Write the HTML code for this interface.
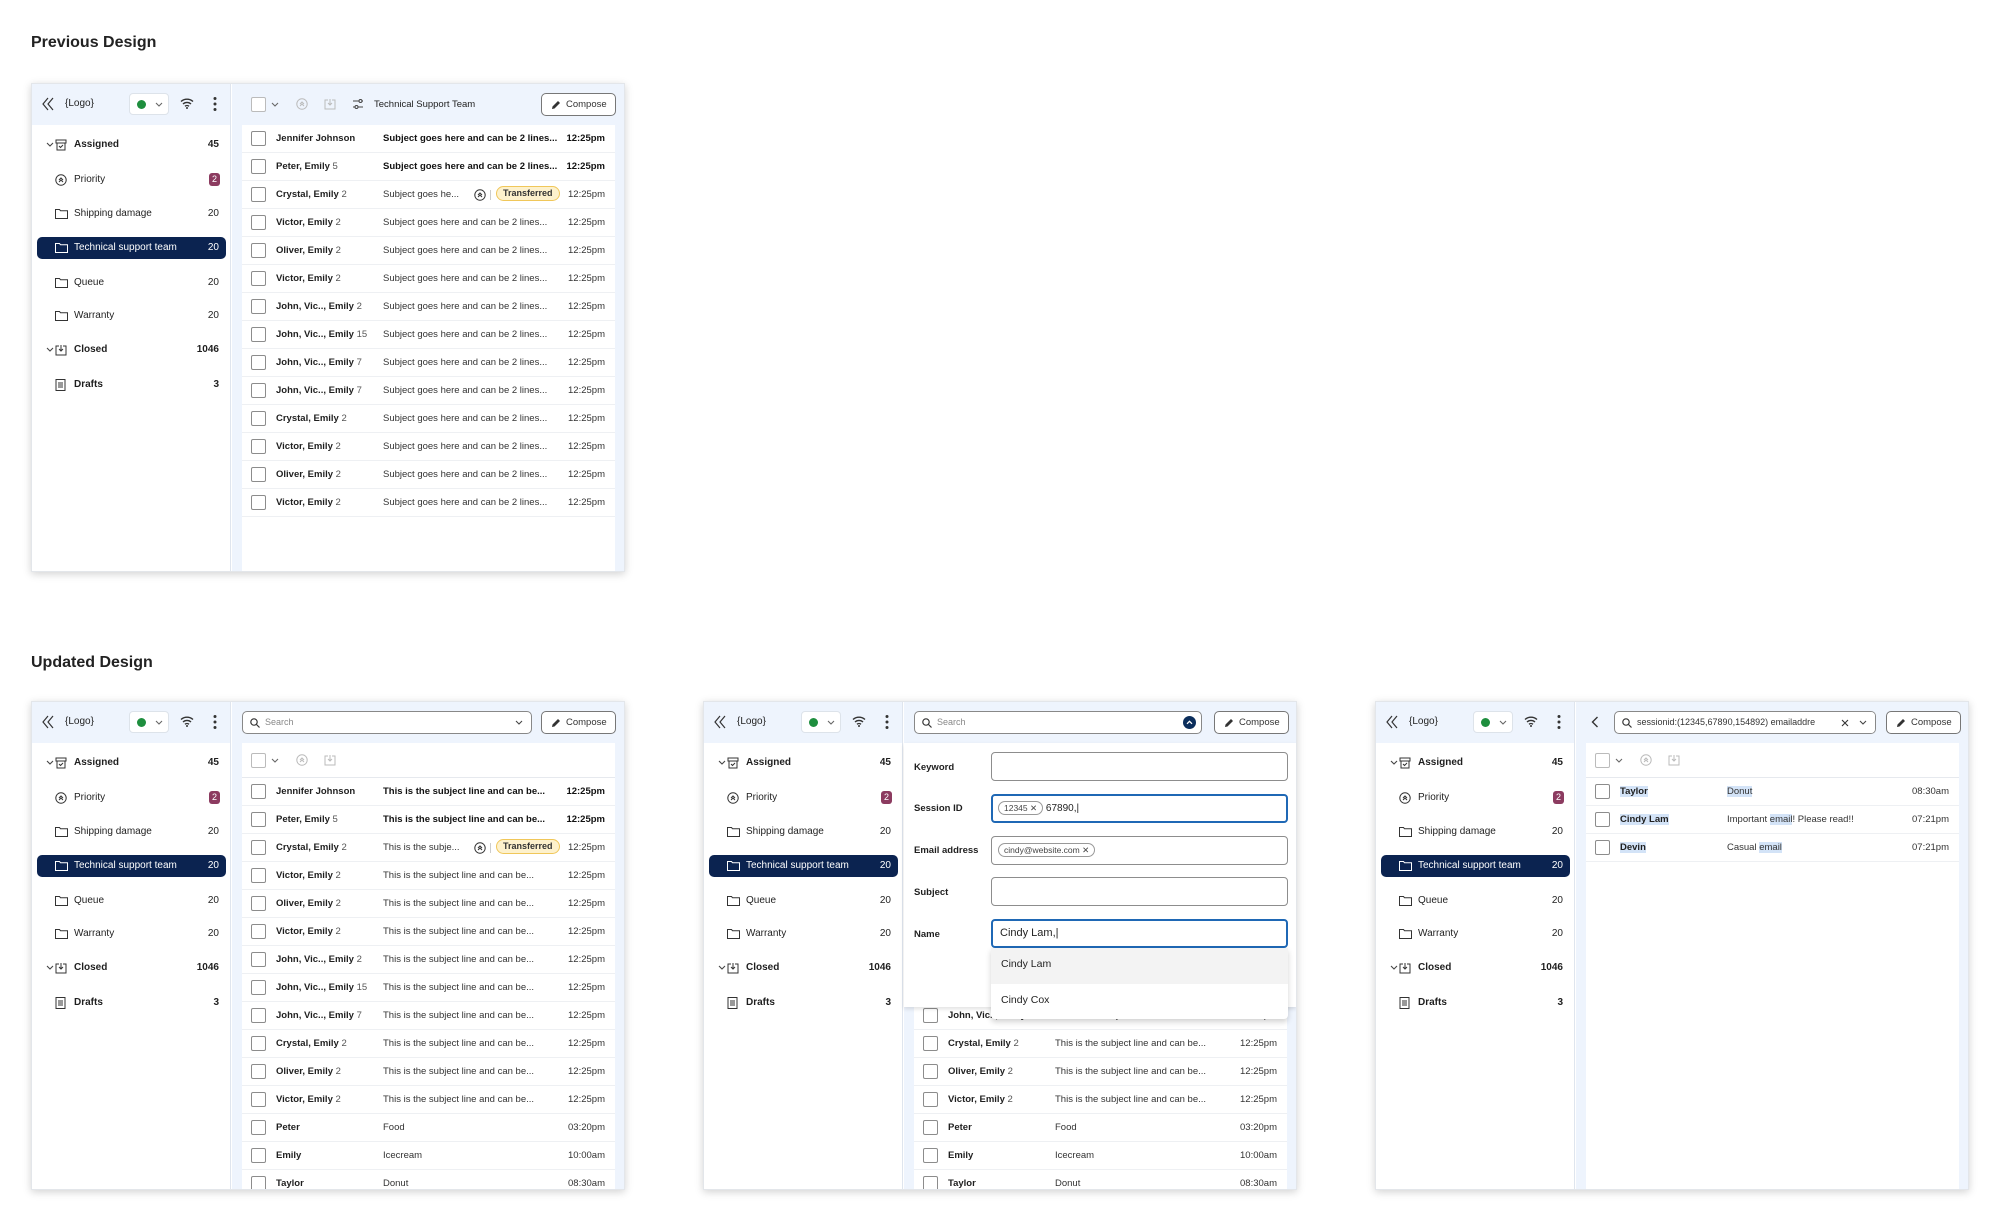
<!DOCTYPE html>
<html><head><meta charset="utf-8"><style>
*{box-sizing:border-box;margin:0;padding:0}
body{width:2000px;height:1228px;background:#fff;font-family:"Liberation Sans",sans-serif;color:#1f1f1f;position:relative;overflow:hidden}
h2{position:absolute;left:31px;font-size:16px;font-weight:bold;color:#222}
.panel{position:absolute;width:594px;height:489px;background:#fff;box-shadow:0 2px 8px rgba(0,0,0,.18);border:1px solid #e3e6ea;overflow:hidden}
.side{position:absolute;left:0;top:0;width:199px;height:100%;border-right:1px solid #dfe5ee;background:#fff}
.shead{position:absolute;left:0;top:0;width:100%;height:41px;background:#eef4fd}
.abs{position:absolute}
.logo{position:absolute;left:33px;top:14px;font-size:10px}
.stat{position:absolute;left:97px;top:9px;width:40px;height:22px;border:1px solid #dde3ea;border-radius:4px;background:#fff}
.stat i{position:absolute;left:7px;top:6px;width:9px;height:9px;border-radius:50%;background:#1e8e3e}
.item{position:absolute;left:5px;width:189px;height:22px;font-size:10px;font-weight:bold}
.item.sel{background:#0b2350;color:#fff;border-radius:5px}
.item .lb{position:absolute;left:37px;top:5px}
.item .ct{position:absolute;right:7px;top:5px}
.item svg.ic{position:absolute;left:18px;top:5px}
.item svg.car{position:absolute;left:9px;top:8px}
.badge{position:absolute;right:6px;top:4px;width:11px;height:13px;background:#8c3b60;color:#fff;border-radius:3px;font-size:9px;text-align:center;line-height:13px}
.main{position:absolute;left:200px;top:0;right:0;bottom:0;background:#eef4fd}
.card{position:absolute;left:10px;right:9px;top:41px;bottom:0;background:#fff}
.compose{position:absolute;left:309px;top:9px;width:75px;height:23px;border:1px solid #777;border-radius:5px;background:#fff;font-size:9.5px;line-height:21px;padding-left:24px;color:#333}
.compose svg{position:absolute;left:9px;top:6px}
.search{position:absolute;top:9px;height:23px;border:1px solid #888;border-radius:5px;background:#fff;font-size:9px;line-height:21px;padding-left:22px;color:#888;white-space:nowrap;overflow:hidden}
.search svg.q{position:absolute;left:7px;top:6px}
.cb{position:absolute;width:15px;height:15px;border:1px solid #8c8c8c;border-radius:2px;background:#fff}
.tb{position:absolute;left:0;right:0;top:0;height:35px;border-bottom:1px solid #e6e9ee}
.rows{position:absolute;left:0;right:0}
.row{position:relative;height:28px;border-bottom:1px solid #eef0f3;font-size:9.5px;white-space:nowrap}
.row .cb{left:9px;top:6px}
.row .n{position:absolute;left:34px;top:8px;font-weight:bold}
.row .n span{font-weight:normal;color:#555}
.row .s{position:absolute;left:141px;top:8px;color:#333}
.row .t{position:absolute;right:10px;top:8px;color:#333}
.row.b .s,.row.b .t{font-weight:bold;color:#111}
.chip{position:absolute;left:254px;top:5px;height:15px;padding:0 6px;background:#fdf1cc;border:1px solid #f0c75a;border-radius:8px;font-size:9px;line-height:13px;font-weight:bold;color:#333}
.hl{background:#d3e3f7}
.lbl{position:absolute;left:10px;font-size:9.5px;font-weight:bold}
.fld{position:absolute;left:87px;width:297px;height:29px;border:1px solid #8d8d8d;border-radius:4px;background:#fff;font-size:10px}
.fld.f{border:2px solid #1f68b5}
.tag{display:inline-block;border:1px solid #999;border-radius:9px;font-size:8.5px;padding:0 5px;height:14px;line-height:12px;color:#444;margin-left:6px;margin-top:6px}
</style></head><body>

<h2 style="top:34px">Previous Design</h2>
<h2 style="top:654px">Updated Design</h2>

<!-- ============ PANEL 1 ============ -->
<div class="panel" style="left:31px;top:83px">
 <div class="side">
  <div class="shead">
   <svg class="abs" style="left:10px;top:13px" width="12" height="14" viewBox="0 0 12 14"><path d="M6 1L1 7l5 6M11 1L6 7l5 6" fill="none" stroke="#333" stroke-width="1.2"/></svg>
   <div class="logo">{Logo}</div>
   <div class="stat"><i></i><svg class="abs" style="left:25px;top:8px" width="8" height="6" viewBox="0 0 8 6"><path d="M1 1l3 3 3-3" fill="none" stroke="#666" stroke-width="1.1"/></svg></div>
   <svg class="abs" style="left:148px;top:13px" width="14" height="12" viewBox="0 0 14 12"><path d="M1 4.5a9 9 0 0 1 12 0M3 7a6 6 0 0 1 8 0M5 9.3a3 3 0 0 1 4 0" fill="none" stroke="#333" stroke-width="1.4"/><circle cx="7" cy="11" r="1" fill="#333"/></svg>
   <svg class="abs" style="left:181px;top:12px" width="4" height="16" viewBox="0 0 4 16"><circle cx="2" cy="2.5" r="1.5" fill="#333"/><circle cx="2" cy="8" r="1.5" fill="#333"/><circle cx="2" cy="13.5" r="1.5" fill="#333"/></svg>
  </div>
  <div class="item" style="top:50px"><svg class="car" width="8" height="6" viewBox="0 0 8 6"><path d="M1 1l3 3 3-3" fill="none" stroke="#444" stroke-width="1.1"/></svg><svg class="ic" width="12" height="12" viewBox="0 0 12 12"><path d="M1 1h10v3H1zM2 4v7h8V4M4 7l1.5 1.5L8 6" fill="none" stroke="#333" stroke-width="1"/></svg><span class="lb">Assigned</span><span class="ct">45</span></div>
  <div class="item" style="top:85px;font-weight:normal"><svg class="ic" width="12" height="12" viewBox="0 0 12 12"><circle cx="6" cy="6" r="5.2" fill="none" stroke="#333"/><path d="M4 6l2-2 2 2M4 8l2-2 2 2" fill="none" stroke="#333"/></svg><span class="lb">Priority</span><span class="badge">2</span></div>
  <div class="item" style="top:119px;font-weight:normal"><svg class="ic" width="13" height="11" viewBox="0 0 13 11"><path d="M.5 1.5h4l1 1.2h7v7.8H.5z" fill="none" stroke="#333"/></svg><span class="lb">Shipping damage</span><span class="ct">20</span></div>
  <div class="item sel" style="top:153px;font-weight:normal"><svg class="ic" width="13" height="11" viewBox="0 0 13 11"><path d="M.5 1.5h4l1 1.2h7v7.8H.5z" fill="none" stroke="#fff"/></svg><span class="lb">Technical support team</span><span class="ct">20</span></div>
  <div class="item" style="top:188px;font-weight:normal"><svg class="ic" width="13" height="11" viewBox="0 0 13 11"><path d="M.5 1.5h4l1 1.2h7v7.8H.5z" fill="none" stroke="#333"/></svg><span class="lb">Queue</span><span class="ct">20</span></div>
  <div class="item" style="top:221px;font-weight:normal"><svg class="ic" width="13" height="11" viewBox="0 0 13 11"><path d="M.5 1.5h4l1 1.2h7v7.8H.5z" fill="none" stroke="#333"/></svg><span class="lb">Warranty</span><span class="ct">20</span></div>
  <div class="item" style="top:255px"><svg class="car" width="8" height="6" viewBox="0 0 8 6"><path d="M1 1l3 3 3-3" fill="none" stroke="#444" stroke-width="1.1"/></svg><svg class="ic" width="12" height="12" viewBox="0 0 12 12"><path d="M4 2H1v9h10V2H8M6 1v6M4 5l2 2 2-2" fill="none" stroke="#333"/></svg><span class="lb">Closed</span><span class="ct">1046</span></div>
  <div class="item" style="top:290px"><svg class="ic" width="11" height="12" viewBox="0 0 11 12"><path d="M1 .5h9v11H1zM3 4h5M3 6h5M3 8h5" fill="none" stroke="#333"/></svg><span class="lb">Drafts</span><span class="ct">3</span></div>
 </div>
 <div class="main">
  <div class="cb" style="left:19px;top:13px;border-color:#bbb"></div>
  <svg class="abs" style="left:39px;top:18px" width="8" height="6" viewBox="0 0 8 6"><path d="M1 1l3 3 3-3" fill="none" stroke="#666" stroke-width="1.1"/></svg>
  <svg class="abs" style="left:64px;top:14px" width="12" height="12" viewBox="0 0 12 12"><circle cx="6" cy="6" r="5.2" fill="none" stroke="#bbb"/><path d="M4 6l2-2 2 2M4 8l2-2 2 2" fill="none" stroke="#bbb"/></svg>
  <svg class="abs" style="left:92px;top:14px" width="12" height="12" viewBox="0 0 12 12"><path d="M4 2H1v9h10V2H8M6 1v6M4 5l2 2 2-2" fill="none" stroke="#bbb"/></svg>
  <svg class="abs" style="left:120px;top:14px" width="12" height="12" viewBox="0 0 12 12"><path d="M1 3h6M10 3h1M1 9h2M6 9h5" stroke="#444" fill="none"/><circle cx="8.5" cy="3" r="1.5" fill="none" stroke="#444"/><circle cx="4.5" cy="9" r="1.5" fill="none" stroke="#444"/></svg>
  <div class="abs" style="left:142px;top:15px;font-size:9.5px">Technical Support Team</div>
  <div class="compose"><svg width="10" height="10" viewBox="0 0 10 10"><path d="M1 9l.5-2.5L7 1l2 2-5.5 5.5z" fill="#333"/></svg>Compose</div>
  <div class="card">
   <div class="rows" style="top:0">
    <div class="row b"><div class="cb"></div><div class="n">Jennifer Johnson</div><div class="s">Subject goes here and can be 2 lines...</div><div class="t">12:25pm</div></div>
    <div class="row b"><div class="cb"></div><div class="n">Peter, Emily <span>5</span></div><div class="s">Subject goes here and can be 2 lines...</div><div class="t">12:25pm</div></div>
    <div class="row"><div class="cb"></div><div class="n">Crystal, Emily <span>2</span></div><div class="s">Subject goes he...</div><svg class="abs" style="left:232px;top:8px" width="12" height="12" viewBox="0 0 12 12"><circle cx="6" cy="6" r="5.2" fill="none" stroke="#333"/><path d="M4 6l2-2 2 2M4 8l2-2 2 2" fill="none" stroke="#333"/></svg><div class="abs" style="left:248px;top:9px;width:1px;height:10px;background:#ccc"></div><div class="chip">Transferred</div><div class="t">12:25pm</div></div>
    <div class="row"><div class="cb"></div><div class="n">Victor, Emily <span>2</span></div><div class="s">Subject goes here and can be 2 lines...</div><div class="t">12:25pm</div></div>
    <div class="row"><div class="cb"></div><div class="n">Oliver, Emily <span>2</span></div><div class="s">Subject goes here and can be 2 lines...</div><div class="t">12:25pm</div></div>
    <div class="row"><div class="cb"></div><div class="n">Victor, Emily <span>2</span></div><div class="s">Subject goes here and can be 2 lines...</div><div class="t">12:25pm</div></div>
    <div class="row"><div class="cb"></div><div class="n">John, Vic.., Emily <span>2</span></div><div class="s">Subject goes here and can be 2 lines...</div><div class="t">12:25pm</div></div>
    <div class="row"><div class="cb"></div><div class="n">John, Vic.., Emily <span>15</span></div><div class="s">Subject goes here and can be 2 lines...</div><div class="t">12:25pm</div></div>
    <div class="row"><div class="cb"></div><div class="n">John, Vic.., Emily <span>7</span></div><div class="s">Subject goes here and can be 2 lines...</div><div class="t">12:25pm</div></div>
    <div class="row"><div class="cb"></div><div class="n">John, Vic.., Emily <span>7</span></div><div class="s">Subject goes here and can be 2 lines...</div><div class="t">12:25pm</div></div>
    <div class="row"><div class="cb"></div><div class="n">Crystal, Emily <span>2</span></div><div class="s">Subject goes here and can be 2 lines...</div><div class="t">12:25pm</div></div>
    <div class="row"><div class="cb"></div><div class="n">Victor, Emily <span>2</span></div><div class="s">Subject goes here and can be 2 lines...</div><div class="t">12:25pm</div></div>
    <div class="row"><div class="cb"></div><div class="n">Oliver, Emily <span>2</span></div><div class="s">Subject goes here and can be 2 lines...</div><div class="t">12:25pm</div></div>
    <div class="row"><div class="cb"></div><div class="n">Victor, Emily <span>2</span></div><div class="s">Subject goes here and can be 2 lines...</div><div class="t">12:25pm</div></div>
   </div>
  </div>
 </div>
</div>

<!-- PANEL 2 -->
<div class="panel" style="left:31px;top:701px">
 <div class="side">
  <div class="shead">
   <svg class="abs" style="left:10px;top:13px" width="12" height="14" viewBox="0 0 12 14"><path d="M6 1L1 7l5 6M11 1L6 7l5 6" fill="none" stroke="#333" stroke-width="1.2"/></svg>
   <div class="logo">{Logo}</div>
   <div class="stat"><i></i><svg class="abs" style="left:25px;top:8px" width="8" height="6" viewBox="0 0 8 6"><path d="M1 1l3 3 3-3" fill="none" stroke="#666" stroke-width="1.1"/></svg></div>
   <svg class="abs" style="left:148px;top:13px" width="14" height="12" viewBox="0 0 14 12"><path d="M1 4.5a9 9 0 0 1 12 0M3 7a6 6 0 0 1 8 0M5 9.3a3 3 0 0 1 4 0" fill="none" stroke="#333" stroke-width="1.4"/><circle cx="7" cy="11" r="1" fill="#333"/></svg>
   <svg class="abs" style="left:181px;top:12px" width="4" height="16" viewBox="0 0 4 16"><circle cx="2" cy="2.5" r="1.5" fill="#333"/><circle cx="2" cy="8" r="1.5" fill="#333"/><circle cx="2" cy="13.5" r="1.5" fill="#333"/></svg>
  </div>
  <div class="item" style="top:50px"><svg class="car" width="8" height="6" viewBox="0 0 8 6"><path d="M1 1l3 3 3-3" fill="none" stroke="#444" stroke-width="1.1"/></svg><svg class="ic" width="12" height="12" viewBox="0 0 12 12"><path d="M1 1h10v3H1zM2 4v7h8V4M4 7l1.5 1.5L8 6" fill="none" stroke="#333" stroke-width="1"/></svg><span class="lb">Assigned</span><span class="ct">45</span></div>
  <div class="item" style="top:85px;font-weight:normal"><svg class="ic" width="12" height="12" viewBox="0 0 12 12"><circle cx="6" cy="6" r="5.2" fill="none" stroke="#333"/><path d="M4 6l2-2 2 2M4 8l2-2 2 2" fill="none" stroke="#333"/></svg><span class="lb">Priority</span><span class="badge">2</span></div>
  <div class="item" style="top:119px;font-weight:normal"><svg class="ic" width="13" height="11" viewBox="0 0 13 11"><path d="M.5 1.5h4l1 1.2h7v7.8H.5z" fill="none" stroke="#333"/></svg><span class="lb">Shipping damage</span><span class="ct">20</span></div>
  <div class="item sel" style="top:153px;font-weight:normal"><svg class="ic" width="13" height="11" viewBox="0 0 13 11"><path d="M.5 1.5h4l1 1.2h7v7.8H.5z" fill="none" stroke="#fff"/></svg><span class="lb">Technical support team</span><span class="ct">20</span></div>
  <div class="item" style="top:188px;font-weight:normal"><svg class="ic" width="13" height="11" viewBox="0 0 13 11"><path d="M.5 1.5h4l1 1.2h7v7.8H.5z" fill="none" stroke="#333"/></svg><span class="lb">Queue</span><span class="ct">20</span></div>
  <div class="item" style="top:221px;font-weight:normal"><svg class="ic" width="13" height="11" viewBox="0 0 13 11"><path d="M.5 1.5h4l1 1.2h7v7.8H.5z" fill="none" stroke="#333"/></svg><span class="lb">Warranty</span><span class="ct">20</span></div>
  <div class="item" style="top:255px"><svg class="car" width="8" height="6" viewBox="0 0 8 6"><path d="M1 1l3 3 3-3" fill="none" stroke="#444" stroke-width="1.1"/></svg><svg class="ic" width="12" height="12" viewBox="0 0 12 12"><path d="M4 2H1v9h10V2H8M6 1v6M4 5l2 2 2-2" fill="none" stroke="#333"/></svg><span class="lb">Closed</span><span class="ct">1046</span></div>
  <div class="item" style="top:290px"><svg class="ic" width="11" height="12" viewBox="0 0 11 12"><path d="M1 .5h9v11H1zM3 4h5M3 6h5M3 8h5" fill="none" stroke="#333"/></svg><span class="lb">Drafts</span><span class="ct">3</span></div>
 </div>
 <div class="main">
  <div class="search" style="left:10px;width:290px"><svg class="q" width="10" height="10" viewBox="0 0 10 10"><circle cx="4" cy="4" r="3.2" fill="none" stroke="#333" stroke-width="1.2"/><path d="M6.5 6.5L9.5 9.5" stroke="#333" stroke-width="1.2"/></svg>Search<svg class="abs" style="right:8px;top:8px" width="8" height="6" viewBox="0 0 8 6"><path d="M1 1l3 3 3-3" fill="none" stroke="#444" stroke-width="1.1"/></svg></div>
  <div class="compose"><svg width="10" height="10" viewBox="0 0 10 10"><path d="M1 9l.5-2.5L7 1l2 2-5.5 5.5z" fill="#333"/></svg>Compose</div>
  <div class="card">
   <div class="tb"><div class="cb" style="left:9px;top:10px;border-color:#bbb"></div><svg class="abs" style="left:29px;top:15px" width="8" height="6" viewBox="0 0 8 6"><path d="M1 1l3 3 3-3" fill="none" stroke="#666" stroke-width="1.1"/></svg><svg class="abs" style="left:54px;top:11px" width="12" height="12" viewBox="0 0 12 12"><circle cx="6" cy="6" r="5.2" fill="none" stroke="#bbb"/><path d="M4 6l2-2 2 2M4 8l2-2 2 2" fill="none" stroke="#bbb"/></svg><svg class="abs" style="left:82px;top:11px" width="12" height="12" viewBox="0 0 12 12"><path d="M4 2H1v9h10V2H8M6 1v6M4 5l2 2 2-2" fill="none" stroke="#bbb"/></svg></div>
   <div class="rows" style="top:35px">
    <div class="row b"><div class="cb"></div><div class="n">Jennifer Johnson</div><div class="s">This is the subject line and can be...</div><div class="t">12:25pm</div></div>
    <div class="row b"><div class="cb"></div><div class="n">Peter, Emily <span>5</span></div><div class="s">This is the subject line and can be...</div><div class="t">12:25pm</div></div>
    <div class="row"><div class="cb"></div><div class="n">Crystal, Emily <span>2</span></div><div class="s">This is the subje...</div><svg class="abs" style="left:232px;top:8px" width="12" height="12" viewBox="0 0 12 12"><circle cx="6" cy="6" r="5.2" fill="none" stroke="#333"/><path d="M4 6l2-2 2 2M4 8l2-2 2 2" fill="none" stroke="#333"/></svg><div class="abs" style="left:248px;top:9px;width:1px;height:10px;background:#ccc"></div><div class="chip">Transferred</div><div class="t">12:25pm</div></div>
    <div class="row"><div class="cb"></div><div class="n">Victor, Emily <span>2</span></div><div class="s">This is the subject line and can be...</div><div class="t">12:25pm</div></div>
    <div class="row"><div class="cb"></div><div class="n">Oliver, Emily <span>2</span></div><div class="s">This is the subject line and can be...</div><div class="t">12:25pm</div></div>
    <div class="row"><div class="cb"></div><div class="n">Victor, Emily <span>2</span></div><div class="s">This is the subject line and can be...</div><div class="t">12:25pm</div></div>
    <div class="row"><div class="cb"></div><div class="n">John, Vic.., Emily <span>2</span></div><div class="s">This is the subject line and can be...</div><div class="t">12:25pm</div></div>
    <div class="row"><div class="cb"></div><div class="n">John, Vic.., Emily <span>15</span></div><div class="s">This is the subject line and can be...</div><div class="t">12:25pm</div></div>
    <div class="row"><div class="cb"></div><div class="n">John, Vic.., Emily <span>7</span></div><div class="s">This is the subject line and can be...</div><div class="t">12:25pm</div></div>
    <div class="row"><div class="cb"></div><div class="n">Crystal, Emily <span>2</span></div><div class="s">This is the subject line and can be...</div><div class="t">12:25pm</div></div>
    <div class="row"><div class="cb"></div><div class="n">Oliver, Emily <span>2</span></div><div class="s">This is the subject line and can be...</div><div class="t">12:25pm</div></div>
    <div class="row"><div class="cb"></div><div class="n">Victor, Emily <span>2</span></div><div class="s">This is the subject line and can be...</div><div class="t">12:25pm</div></div>
    <div class="row"><div class="cb"></div><div class="n">Peter</div><div class="s">Food</div><div class="t">03:20pm</div></div>
    <div class="row"><div class="cb"></div><div class="n">Emily</div><div class="s">Icecream</div><div class="t">10:00am</div></div>
    <div class="row"><div class="cb"></div><div class="n">Taylor</div><div class="s">Donut</div><div class="t">08:30am</div></div>
   </div>
  </div>
 </div>
</div>

<!-- PANEL 3 -->
<div class="panel" style="left:703px;top:701px">
 <div class="side">
  <div class="shead">
   <svg class="abs" style="left:10px;top:13px" width="12" height="14" viewBox="0 0 12 14"><path d="M6 1L1 7l5 6M11 1L6 7l5 6" fill="none" stroke="#333" stroke-width="1.2"/></svg>
   <div class="logo">{Logo}</div>
   <div class="stat"><i></i><svg class="abs" style="left:25px;top:8px" width="8" height="6" viewBox="0 0 8 6"><path d="M1 1l3 3 3-3" fill="none" stroke="#666" stroke-width="1.1"/></svg></div>
   <svg class="abs" style="left:148px;top:13px" width="14" height="12" viewBox="0 0 14 12"><path d="M1 4.5a9 9 0 0 1 12 0M3 7a6 6 0 0 1 8 0M5 9.3a3 3 0 0 1 4 0" fill="none" stroke="#333" stroke-width="1.4"/><circle cx="7" cy="11" r="1" fill="#333"/></svg>
   <svg class="abs" style="left:181px;top:12px" width="4" height="16" viewBox="0 0 4 16"><circle cx="2" cy="2.5" r="1.5" fill="#333"/><circle cx="2" cy="8" r="1.5" fill="#333"/><circle cx="2" cy="13.5" r="1.5" fill="#333"/></svg>
  </div>
  <div class="item" style="top:50px"><svg class="car" width="8" height="6" viewBox="0 0 8 6"><path d="M1 1l3 3 3-3" fill="none" stroke="#444" stroke-width="1.1"/></svg><svg class="ic" width="12" height="12" viewBox="0 0 12 12"><path d="M1 1h10v3H1zM2 4v7h8V4M4 7l1.5 1.5L8 6" fill="none" stroke="#333" stroke-width="1"/></svg><span class="lb">Assigned</span><span class="ct">45</span></div>
  <div class="item" style="top:85px;font-weight:normal"><svg class="ic" width="12" height="12" viewBox="0 0 12 12"><circle cx="6" cy="6" r="5.2" fill="none" stroke="#333"/><path d="M4 6l2-2 2 2M4 8l2-2 2 2" fill="none" stroke="#333"/></svg><span class="lb">Priority</span><span class="badge">2</span></div>
  <div class="item" style="top:119px;font-weight:normal"><svg class="ic" width="13" height="11" viewBox="0 0 13 11"><path d="M.5 1.5h4l1 1.2h7v7.8H.5z" fill="none" stroke="#333"/></svg><span class="lb">Shipping damage</span><span class="ct">20</span></div>
  <div class="item sel" style="top:153px;font-weight:normal"><svg class="ic" width="13" height="11" viewBox="0 0 13 11"><path d="M.5 1.5h4l1 1.2h7v7.8H.5z" fill="none" stroke="#fff"/></svg><span class="lb">Technical support team</span><span class="ct">20</span></div>
  <div class="item" style="top:188px;font-weight:normal"><svg class="ic" width="13" height="11" viewBox="0 0 13 11"><path d="M.5 1.5h4l1 1.2h7v7.8H.5z" fill="none" stroke="#333"/></svg><span class="lb">Queue</span><span class="ct">20</span></div>
  <div class="item" style="top:221px;font-weight:normal"><svg class="ic" width="13" height="11" viewBox="0 0 13 11"><path d="M.5 1.5h4l1 1.2h7v7.8H.5z" fill="none" stroke="#333"/></svg><span class="lb">Warranty</span><span class="ct">20</span></div>
  <div class="item" style="top:255px"><svg class="car" width="8" height="6" viewBox="0 0 8 6"><path d="M1 1l3 3 3-3" fill="none" stroke="#444" stroke-width="1.1"/></svg><svg class="ic" width="12" height="12" viewBox="0 0 12 12"><path d="M4 2H1v9h10V2H8M6 1v6M4 5l2 2 2-2" fill="none" stroke="#333"/></svg><span class="lb">Closed</span><span class="ct">1046</span></div>
  <div class="item" style="top:290px"><svg class="ic" width="11" height="12" viewBox="0 0 11 12"><path d="M1 .5h9v11H1zM3 4h5M3 6h5M3 8h5" fill="none" stroke="#333"/></svg><span class="lb">Drafts</span><span class="ct">3</span></div>
 </div>
 <div class="main">
  <div class="search" style="left:10px;width:288px"><svg class="q" width="10" height="10" viewBox="0 0 10 10"><circle cx="4" cy="4" r="3.2" fill="none" stroke="#333" stroke-width="1.2"/><path d="M6.5 6.5L9.5 9.5" stroke="#333" stroke-width="1.2"/></svg>Search<svg class="abs" style="right:5px;top:4px" width="13" height="13" viewBox="0 0 13 13"><circle cx="6.5" cy="6.5" r="6.5" fill="#0b2e5c"/><path d="M4 7.8l2.5-2.5 2.5 2.5" fill="none" stroke="#fff" stroke-width="1.3"/></svg></div>
  <div class="compose" style="left:310px"><svg width="10" height="10" viewBox="0 0 10 10"><path d="M1 9l.5-2.5L7 1l2 2-5.5 5.5z" fill="#333"/></svg>Compose</div>
  <div class="card">
   <div class="tb"></div>
   <div class="rows" style="top:35px">
    <div class="row"></div><div class="row"></div><div class="row"></div><div class="row"></div><div class="row"></div><div class="row"></div><div class="row"></div><div class="row"></div>
    <div class="row"><div class="cb"></div><div class="n">John, Vic.., Emily <span>7</span></div><div class="s">This is the subject line and can be...</div><div class="t">12:25pm</div></div>
    <div class="row"><div class="cb"></div><div class="n">Crystal, Emily <span>2</span></div><div class="s">This is the subject line and can be...</div><div class="t">12:25pm</div></div>
    <div class="row"><div class="cb"></div><div class="n">Oliver, Emily <span>2</span></div><div class="s">This is the subject line and can be...</div><div class="t">12:25pm</div></div>
    <div class="row"><div class="cb"></div><div class="n">Victor, Emily <span>2</span></div><div class="s">This is the subject line and can be...</div><div class="t">12:25pm</div></div>
    <div class="row"><div class="cb"></div><div class="n">Peter</div><div class="s">Food</div><div class="t">03:20pm</div></div>
    <div class="row"><div class="cb"></div><div class="n">Emily</div><div class="s">Icecream</div><div class="t">10:00am</div></div>
    <div class="row"><div class="cb"></div><div class="n">Taylor</div><div class="s">Donut</div><div class="t">08:30am</div></div>
   </div>
  </div>
  <div class="abs" style="left:0;right:0;top:41px;height:264px;background:#fff;box-shadow:0 2px 4px rgba(0,0,0,.12)">
   <div class="lbl" style="top:19px">Keyword</div>
   <div class="fld" style="top:9px"></div>
   <div class="lbl" style="top:60px">Session ID</div>
   <div class="fld f" style="top:51px"><span class="tag" style="margin-left:5px;margin-top:5px">12345 &#x2715;</span> <span style="font-size:10px">67890,|</span></div>
   <div class="lbl" style="top:102px">Email address</div>
   <div class="fld" style="top:93px"><span class="tag">cindy@website.com &#x2715;</span></div>
   <div class="lbl" style="top:144px">Subject</div>
   <div class="fld" style="top:134px"></div>
   <div class="lbl" style="top:186px">Name</div>
   <div class="fld f" style="top:176px;font-size:11px;padding:6px 0 0 7px">Cindy Lam,|</div>
  </div>
  <div class="abs" style="left:87px;top:246px;width:297px;height:71px;background:#fff;box-shadow:0 3px 6px rgba(0,0,0,.18);border-radius:0 0 4px 4px;font-size:10.5px">
   <div style="height:36px;background:#f3f3f3;padding:10px 0 0 10px">Cindy Lam</div>
   <div style="padding:10px 0 0 10px">Cindy Cox</div>
  </div>
 </div>
</div>

<!-- PANEL 4 -->
<div class="panel" style="left:1375px;top:701px">
 <div class="side">
  <div class="shead">
   <svg class="abs" style="left:10px;top:13px" width="12" height="14" viewBox="0 0 12 14"><path d="M6 1L1 7l5 6M11 1L6 7l5 6" fill="none" stroke="#333" stroke-width="1.2"/></svg>
   <div class="logo">{Logo}</div>
   <div class="stat"><i></i><svg class="abs" style="left:25px;top:8px" width="8" height="6" viewBox="0 0 8 6"><path d="M1 1l3 3 3-3" fill="none" stroke="#666" stroke-width="1.1"/></svg></div>
   <svg class="abs" style="left:148px;top:13px" width="14" height="12" viewBox="0 0 14 12"><path d="M1 4.5a9 9 0 0 1 12 0M3 7a6 6 0 0 1 8 0M5 9.3a3 3 0 0 1 4 0" fill="none" stroke="#333" stroke-width="1.4"/><circle cx="7" cy="11" r="1" fill="#333"/></svg>
   <svg class="abs" style="left:181px;top:12px" width="4" height="16" viewBox="0 0 4 16"><circle cx="2" cy="2.5" r="1.5" fill="#333"/><circle cx="2" cy="8" r="1.5" fill="#333"/><circle cx="2" cy="13.5" r="1.5" fill="#333"/></svg>
  </div>
  <div class="item" style="top:50px"><svg class="car" width="8" height="6" viewBox="0 0 8 6"><path d="M1 1l3 3 3-3" fill="none" stroke="#444" stroke-width="1.1"/></svg><svg class="ic" width="12" height="12" viewBox="0 0 12 12"><path d="M1 1h10v3H1zM2 4v7h8V4M4 7l1.5 1.5L8 6" fill="none" stroke="#333" stroke-width="1"/></svg><span class="lb">Assigned</span><span class="ct">45</span></div>
  <div class="item" style="top:85px;font-weight:normal"><svg class="ic" width="12" height="12" viewBox="0 0 12 12"><circle cx="6" cy="6" r="5.2" fill="none" stroke="#333"/><path d="M4 6l2-2 2 2M4 8l2-2 2 2" fill="none" stroke="#333"/></svg><span class="lb">Priority</span><span class="badge">2</span></div>
  <div class="item" style="top:119px;font-weight:normal"><svg class="ic" width="13" height="11" viewBox="0 0 13 11"><path d="M.5 1.5h4l1 1.2h7v7.8H.5z" fill="none" stroke="#333"/></svg><span class="lb">Shipping damage</span><span class="ct">20</span></div>
  <div class="item sel" style="top:153px;font-weight:normal"><svg class="ic" width="13" height="11" viewBox="0 0 13 11"><path d="M.5 1.5h4l1 1.2h7v7.8H.5z" fill="none" stroke="#fff"/></svg><span class="lb">Technical support team</span><span class="ct">20</span></div>
  <div class="item" style="top:188px;font-weight:normal"><svg class="ic" width="13" height="11" viewBox="0 0 13 11"><path d="M.5 1.5h4l1 1.2h7v7.8H.5z" fill="none" stroke="#333"/></svg><span class="lb">Queue</span><span class="ct">20</span></div>
  <div class="item" style="top:221px;font-weight:normal"><svg class="ic" width="13" height="11" viewBox="0 0 13 11"><path d="M.5 1.5h4l1 1.2h7v7.8H.5z" fill="none" stroke="#333"/></svg><span class="lb">Warranty</span><span class="ct">20</span></div>
  <div class="item" style="top:255px"><svg class="car" width="8" height="6" viewBox="0 0 8 6"><path d="M1 1l3 3 3-3" fill="none" stroke="#444" stroke-width="1.1"/></svg><svg class="ic" width="12" height="12" viewBox="0 0 12 12"><path d="M4 2H1v9h10V2H8M6 1v6M4 5l2 2 2-2" fill="none" stroke="#333"/></svg><span class="lb">Closed</span><span class="ct">1046</span></div>
  <div class="item" style="top:290px"><svg class="ic" width="11" height="12" viewBox="0 0 11 12"><path d="M1 .5h9v11H1zM3 4h5M3 6h5M3 8h5" fill="none" stroke="#333"/></svg><span class="lb">Drafts</span><span class="ct">3</span></div>
 </div>
 <div class="main">
  <svg class="abs" style="left:15px;top:14px" width="8" height="12" viewBox="0 0 8 12"><path d="M6.5 1L1.5 6l5 5" fill="none" stroke="#333" stroke-width="1.4"/></svg>
  <div class="search" style="left:38px;width:262px;color:#333"><svg class="q" width="10" height="10" viewBox="0 0 10 10"><circle cx="4" cy="4" r="3.2" fill="none" stroke="#333" stroke-width="1.2"/><path d="M6.5 6.5L9.5 9.5" stroke="#333" stroke-width="1.2"/></svg>sessionid:(12345,67890,154892) emailaddre<span class="abs" style="right:0;top:0;width:44px;height:21px;background:#fff"></span><svg class="abs" style="right:26px;top:7px" width="8" height="8" viewBox="0 0 8 8"><path d="M1 1l6 6M7 1L1 7" stroke="#333" stroke-width="1.1"/></svg><svg class="abs" style="right:8px;top:8px" width="8" height="6" viewBox="0 0 8 6"><path d="M1 1l3 3 3-3" fill="none" stroke="#444" stroke-width="1.1"/></svg></div>
  <div class="compose" style="left:310px"><svg width="10" height="10" viewBox="0 0 10 10"><path d="M1 9l.5-2.5L7 1l2 2-5.5 5.5z" fill="#333"/></svg>Compose</div>
  <div class="card">
   <div class="tb"><div class="cb" style="left:9px;top:10px;border-color:#bbb"></div><svg class="abs" style="left:29px;top:15px" width="8" height="6" viewBox="0 0 8 6"><path d="M1 1l3 3 3-3" fill="none" stroke="#666" stroke-width="1.1"/></svg><svg class="abs" style="left:54px;top:11px" width="12" height="12" viewBox="0 0 12 12"><circle cx="6" cy="6" r="5.2" fill="none" stroke="#bbb"/><path d="M4 6l2-2 2 2M4 8l2-2 2 2" fill="none" stroke="#bbb"/></svg><svg class="abs" style="left:82px;top:11px" width="12" height="12" viewBox="0 0 12 12"><path d="M4 2H1v9h10V2H8M6 1v6M4 5l2 2 2-2" fill="none" stroke="#bbb"/></svg></div>
   <div class="rows" style="top:35px">
    <div class="row"><div class="cb"></div><div class="n"><span class="hl" style="font-weight:bold;color:#1f1f1f">Taylor</span></div><div class="s"><span class="hl">Donut</span></div><div class="t">08:30am</div></div>
    <div class="row"><div class="cb"></div><div class="n"><span class="hl" style="font-weight:bold;color:#1f1f1f">Cindy Lam</span></div><div class="s">Important <span class="hl">email</span>! Please read!!</div><div class="t">07:21pm</div></div>
    <div class="row"><div class="cb"></div><div class="n"><span class="hl" style="font-weight:bold;color:#1f1f1f">Devin</span></div><div class="s">Casual <span class="hl">email</span></div><div class="t">07:21pm</div></div>
   </div>
  </div>
 </div>
</div>

</body></html>
